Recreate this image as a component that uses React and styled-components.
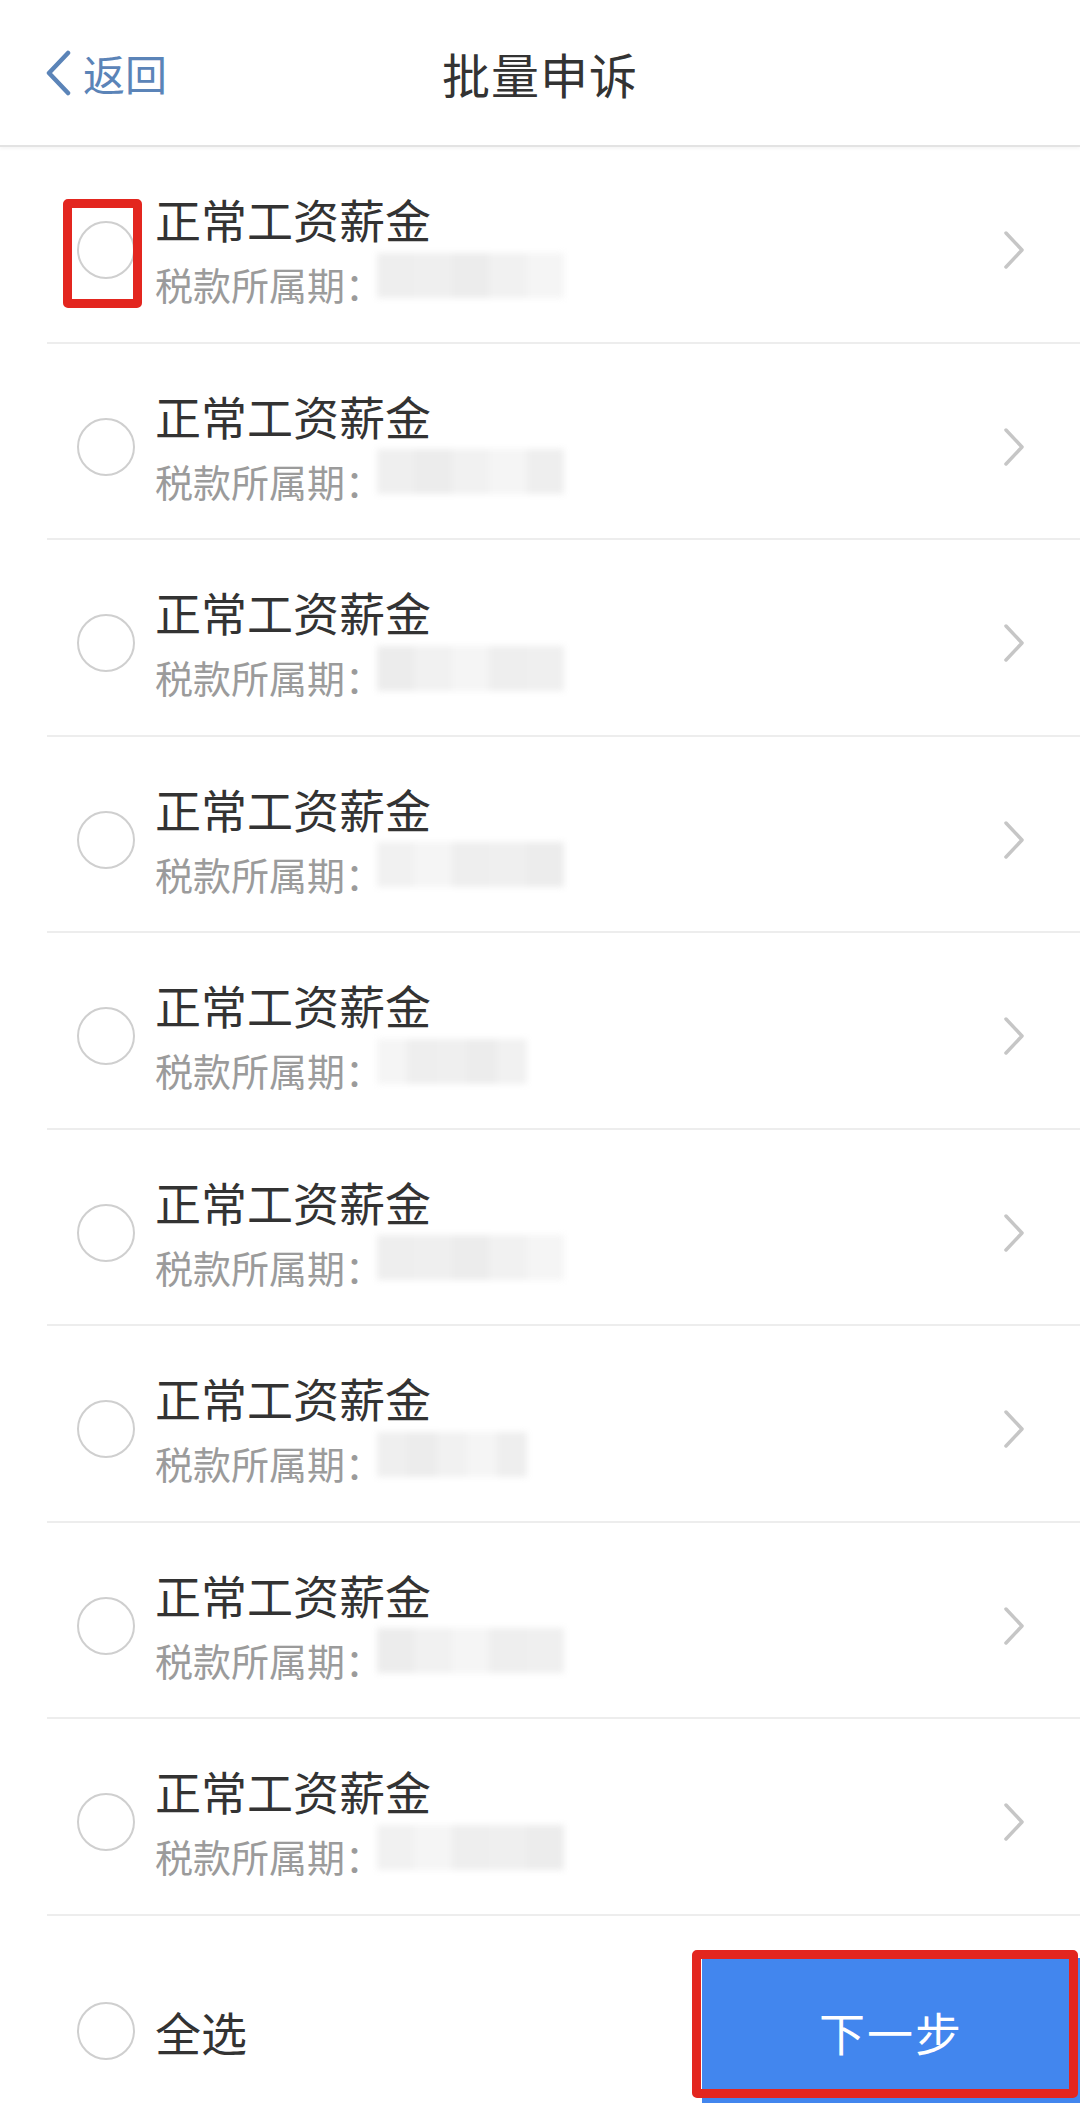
import React from 'react';
import styled, { createGlobalStyle } from 'styled-components';

const GlobalStyle = createGlobalStyle`
  html, body {
    margin: 0;
    padding: 0;
    background: #ffffff;
  }
  body {
    font-family: "Noto Sans CJK SC", "Noto Sans", sans-serif;
    -webkit-font-smoothing: antialiased;
  }
`;

const Page = styled.div`
  width: 1080px;
  height: 2124px;
  display: flex;
  flex-direction: column;
  background: #ffffff;
  overflow: hidden;
`;

const Header = styled.header`
  height: 145px;
  flex-shrink: 0;
  display: grid;
  grid-template-columns: 1fr auto 1fr;
  align-items: center;
  border-bottom: 2px solid #e3e3e3;
  box-shadow: 0 2px 3px rgba(0, 0, 0, 0.04);
`;

const BackButton = styled.div`
  display: flex;
  align-items: center;
  gap: 12px;
  padding-left: 45px;
  color: #5b84b8;
  font-size: 42px;
  line-height: 1;
`;

const Title = styled.h1`
  margin: 0;
  font-size: 48px;
  font-weight: 400;
  color: #333333;
  letter-spacing: 1px;
`;

const List = styled.div`
  margin-left: 47px;
  display: flex;
  flex-direction: column;
`;

const Row = styled.div`
  box-sizing: border-box;
  height: 196.5px;
  display: flex;
  align-items: center;
  padding: 12px 55px 0 30px;
  border-bottom: 2px solid #ededed;
`;

const Radio = styled.span`
  position: relative;
  box-sizing: border-box;
  width: 58px;
  height: 58px;
  flex-shrink: 0;
  border-radius: 50%;
  border: 2.5px solid #cfcfcf;
`;

const Highlight = styled.span`
  position: absolute;
  box-sizing: border-box;
  left: ${p => p.$left}px;
  top: ${p => p.$top}px;
  width: ${p => p.$width}px;
  height: ${p => p.$height}px;
  border: 9px solid #e3261f;
  border-radius: 5px;
  pointer-events: none;
`;

const TextBlock = styled.div`
  flex: 1;
  margin-left: 20px;
  display: flex;
  flex-direction: column;
  gap: 8px;
`;

const ItemTitle = styled.div`
  font-size: 46px;
  line-height: 60px;
  color: #333333;
`;

const ItemSub = styled.div`
  display: flex;
  align-items: center;
  font-size: 38px;
  line-height: 56px;
  color: #9b9b9b;
`;

const Mosaic = styled.span`
  display: flex;
  width: ${p => p.$width}px;
  height: 45px;
  margin-left: -6px;
  margin-top: -18px;
  filter: blur(3px);
  border-radius: 10px 0 0 0;
`;

const MosaicCell = styled.span`
  flex: 1;
  background: ${p => p.$shade};
`;

const Bottom = styled.div`
  flex: 1;
  display: flex;
  align-items: center;
  padding: 22px 0 0 77px;
`;

const SelectAll = styled.span`
  margin-left: 20px;
  font-size: 46px;
  color: #333333;
`;

const NextButton = styled.button`
  position: relative;
  margin-left: auto;
  width: 378px;
  height: 145px;
  border: none;
  padding: 0;
  background: #4286ee;
  color: #ffffff;
  font-family: inherit;
  font-size: 46px;
  letter-spacing: 2px;
`;

const ChevronLeft = () => (
  <svg width="26" height="46" viewBox="0 0 26 46">
    <polyline points="23,3 4,23 23,43" fill="none" stroke="#5b84b8" strokeWidth="4.5" strokeLinecap="round" strokeLinejoin="round" />
  </svg>
);

const ChevronRight = () => (
  <svg width="22" height="40" viewBox="0 0 22 40">
    <polyline points="3,3 19,20 3,37" fill="none" stroke="#c6c6c6" strokeWidth="3.5" strokeLinecap="round" strokeLinejoin="round" />
  </svg>
);

const shades = ['#eeeeee', '#efefef', '#ececec', '#f1f1f1', '#f5f5f5'];
const widths = [187, 187, 187, 187, 150, 187, 150, 187, 187];

const App = () => (
  <Page>
    <GlobalStyle />
    <Header>
      <BackButton>
        <ChevronLeft />
        <span>返回</span>
      </BackButton>
      <Title>批量申诉</Title>
      <div />
    </Header>
    <List>
      {widths.map((w, i) => (
        <Row key={i}>
          <Radio>
            {i === 0 && <Highlight $left={-16} $top={-24} $width={79} $height={109} />}
          </Radio>
          <TextBlock>
            <ItemTitle>正常工资薪金</ItemTitle>
            <ItemSub>
              税款所属期：
              <Mosaic $width={w}>
                {shades.map((s, j) => <MosaicCell key={j} $shade={shades[(i + j) % shades.length]} />)}
              </Mosaic>
            </ItemSub>
          </TextBlock>
          <ChevronRight />
        </Row>
      ))}
    </List>
    <Bottom>
      <Radio />
      <SelectAll>全选</SelectAll>
      <NextButton>
        下一步
        <Highlight $left={-10} $top={-8} $width={386} $height={148} />
      </NextButton>
    </Bottom>
  </Page>
);

export default App;
